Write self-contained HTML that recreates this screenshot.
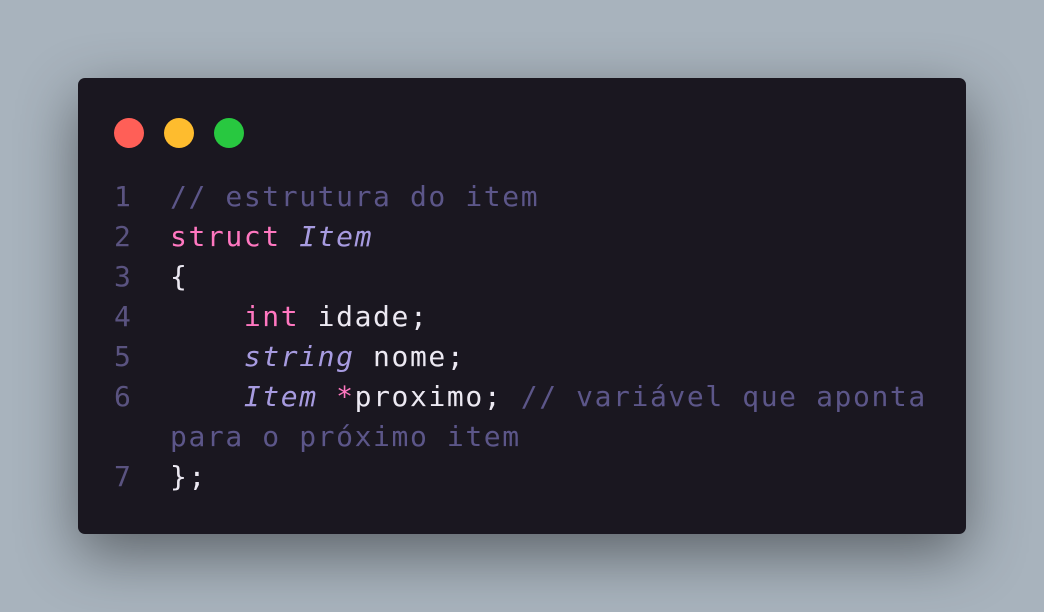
<!DOCTYPE html>
<html><head><meta charset="utf-8"><style>
html,body{margin:0;padding:0}
body{width:1044px;height:612px;background:#a8b3bd;position:relative;overflow:hidden}
.card{position:absolute;left:78px;top:78px;width:888px;height:456px;background:#1a1720;border-radius:7px;box-shadow:0 20px 60px rgba(0,0,0,0.45)}
.dot{position:absolute;top:40px;width:30px;height:30px;border-radius:50%}
.code{position:absolute;left:0;top:99px;font-family:"DejaVu Sans Mono","Liberation Mono",monospace;font-size:28px;letter-spacing:1.6px;line-height:40px;color:#ece9f2}
.l{position:relative;height:40px;white-space:pre}
.n{position:absolute;left:36px;color:#5a5380;width:30px}
.t{position:absolute;left:92px}
.c{color:#5c5689}.k{color:#ff77c0}.i{color:#a79be0;font-style:italic}
</style></head><body>
<div class="card">
<div class="dot" style="left:36px;background:#ff5f57"></div>
<div class="dot" style="left:86px;background:#febc2e"></div>
<div class="dot" style="left:136px;background:#28c840"></div>
<div class="code">
<div class="l"><span class="n">1</span><span class="t"><span class="c">// estrutura do item</span></span></div>
<div class="l"><span class="n">2</span><span class="t"><span class="k">struct</span> <span class="i">Item</span></span></div>
<div class="l"><span class="n">3</span><span class="t">{</span></div>
<div class="l"><span class="n">4</span><span class="t">    <span class="k">int</span> idade;</span></div>
<div class="l"><span class="n">5</span><span class="t">    <span class="i">string</span> nome;</span></div>
<div class="l"><span class="n">6</span><span class="t">    <span class="i">Item</span> <span class="k">*</span>proximo; <span class="c">// variável que aponta</span></span></div>
<div class="l"><span class="t"><span class="c">para o próximo item</span></span></div>
<div class="l"><span class="n">7</span><span class="t">};</span></div>
</div>
</div>
</body></html>
